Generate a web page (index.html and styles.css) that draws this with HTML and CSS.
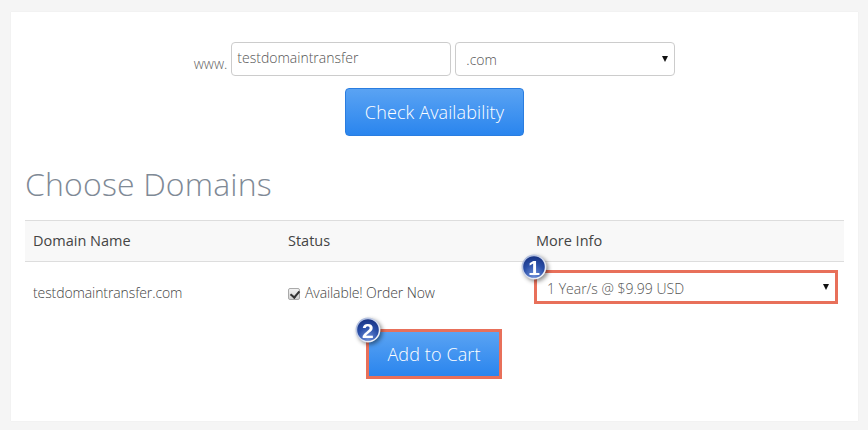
FILE: index.html
```html
<!DOCTYPE html>
<html lang="en">
<head>
<meta charset="utf-8">
<title>Choose Domains</title>
<link rel="stylesheet" href="styles.css">
</head>
<body>
<main class="card">
  <form class="search">
    <span class="www">www.</span>
    <input class="field" type="text" value="testdomaintransfer">
    <div class="select tld"><span>.com</span><i class="arrow"></i></div>
  </form>
  <div class="center"><button class="btn check" type="button">Check Availability</button></div>
  <h2 class="title">Choose Domains</h2>
  <table class="domains">
    <thead>
      <tr><th class="c1">Domain Name</th><th class="c2">Status</th><th class="c3">More Info</th></tr>
    </thead>
    <tbody>
      <tr>
        <td class="c1">testdomaintransfer.com</td>
        <td class="c2"><label class="status"><input class="tick" type="checkbox" checked> Available! Order Now</label></td>
        <td class="c3">
          <div class="select period marked">
            <svg class="badge b1" viewBox="0 0 26 26"><use href="#disc"/><text x="13" y="20.5" class="num">1</text></svg>
            <span>1 Year/s @ $9.99 USD</span><i class="arrow"></i>
          </div>
        </td>
      </tr>
    </tbody>
  </table>
  <div class="center">
    <button class="btn add marked" type="button">
      <svg class="badge b2" viewBox="0 0 26 26"><use href="#disc"/><text x="13" y="20.5" class="num">2</text></svg>
      Add to Cart
    </button>
  </div>
</main>
<svg class="defs" width="0" height="0">
  <defs>
    <radialGradient id="blue" cx=".5" cy=".85" r=".85">
      <stop offset="0" stop-color="#6d8ed8"/>
      <stop offset=".55" stop-color="#2a4fa8"/>
      <stop offset="1" stop-color="#16307f"/>
    </radialGradient>
    <linearGradient id="ring" x1="0" y1="0" x2="1" y2="1">
      <stop offset="0" stop-color="#9fb0d8"/>
      <stop offset="1" stop-color="#ffffff"/>
    </linearGradient>
    <g id="disc">
      <circle cx="13" cy="13" r="11.6" fill="url(#blue)" stroke="url(#ring)" stroke-width="1.6"/>
    </g>
  </defs>
</svg>
</body>
</html>
```
FILE: styles.css
```css
* { box-sizing: border-box; }
html, body { height: 100%; }
body {
  margin: 0;
  padding: 12px 10px 9px 11px;
  background: #f5f5f5;
  font-family: "Open Sans", "Liberation Sans", sans-serif;
  font-size: 14px;
  color: #555;
  overflow: hidden;
}
.card {
  background: #fff;
  height: 409px;
  padding: 30px 14px 0;
  box-shadow: 0 0 1px #e4e4e4;
}
.search {
  display: flex;
  justify-content: center;
  gap: 4px;
  height: 34px;
  margin-bottom: 12px;
}
.www {
  align-self: flex-end;
  font-weight: 300;
  font-size: 14px;
  line-height: 18px;
  margin-bottom: 3px;
  color: #666;
}
.field {
  width: 220px;
  height: 34px;
  border: 1px solid #ccc;
  border-radius: 4px;
  padding: 0 6px 4px 5px;
  font: 300 14px "Open Sans", sans-serif;
  color: #555;
  background: #fff;
  outline: 0;
}
.select {
  position: relative;
  display: flex;
  align-items: center;
  justify-content: space-between;
  height: 34px;
  background: #fff;
  font-weight: 300;
  font-size: 14px;
  color: #555;
}
.tld {
  width: 220px;
  border: 1px solid #ccc;
  border-radius: 4px;
  padding: 0 6px 0 10px;
}
.arrow {
  width: 0;
  height: 0;
  border: 3.5px solid transparent;
  border-top: 6px solid #111;
  border-bottom: 0;
}
.center { display: flex; justify-content: center; }
.btn {
  position: relative;
  border: 1px solid #2a7de0;
  border-radius: 4px;
  background: linear-gradient(#5aa3f3, #2a85ee);
  color: #fff;
  font: 300 18px "Open Sans", sans-serif;
  letter-spacing: .12px;
}
.check { width: 179px; height: 48px; }
.title {
  margin: 27px 0 15px;
  font-weight: 300;
  font-size: 32px;
  line-height: 42px;
  letter-spacing: .15px;
  color: #7f8a96;
}
.domains {
  width: 819px;
  table-layout: fixed;
  border-collapse: collapse;
  font-size: 14px;
}
.domains th {
  height: 41px;
  background: #f8f8f8;
  border-top: 1px solid #ddd;
  border-bottom: 1px solid #ddd;
  padding: 0 8px 1px;
  text-align: left;
  font-weight: 400;
  font-size: 14.5px;
  color: #444;
}
.domains td { height: 62px; padding: 0 8px; font-weight: 300; color: #444; letter-spacing: -.1px; }
.c1 { width: 255px; }
.c2 { width: 248px; }
.c3 { width: 316px; }
.domains td.c3 { padding: 0 6px 0 6px; letter-spacing: 0; }
.status { display: flex; align-items: center; gap: 5px; }
.tick {
  appearance: none;
  position: relative;
  width: 12px;
  height: 12px;
  margin: 3px 0 0;
  border: 1px solid #aaa;
  border-radius: 2px;
  background: linear-gradient(#f2f2f2, #d2d2d2);
}
.tick::after {
  content: "";
  position: absolute;
  left: 3px;
  top: 0;
  width: 4px;
  height: 7px;
  border: solid #333;
  border-width: 0 2px 2px 0;
  transform: rotate(40deg);
}
.marked { border: 3px solid #e8705a; border-radius: 0; }
.period { width: 304px; padding: 3px 6px 0 10px; margin-top: -12px; font-size: 14px; }
.period .arrow { margin-top: -3px; }
.add { width: 136px; height: 50px; margin: 5px 1px 0 0; }
.badge { position: absolute; width: 26px; height: 26px; filter: drop-shadow(2px 2px 2px rgba(0,0,0,.45)); }
.b1 { left: -16px; top: -19px; }
.b2 { left: -14px; top: -15px; }
.num { font: 700 21px "Liberation Sans", sans-serif; fill: #fff; text-anchor: middle; }
.defs { position: absolute; }
```
